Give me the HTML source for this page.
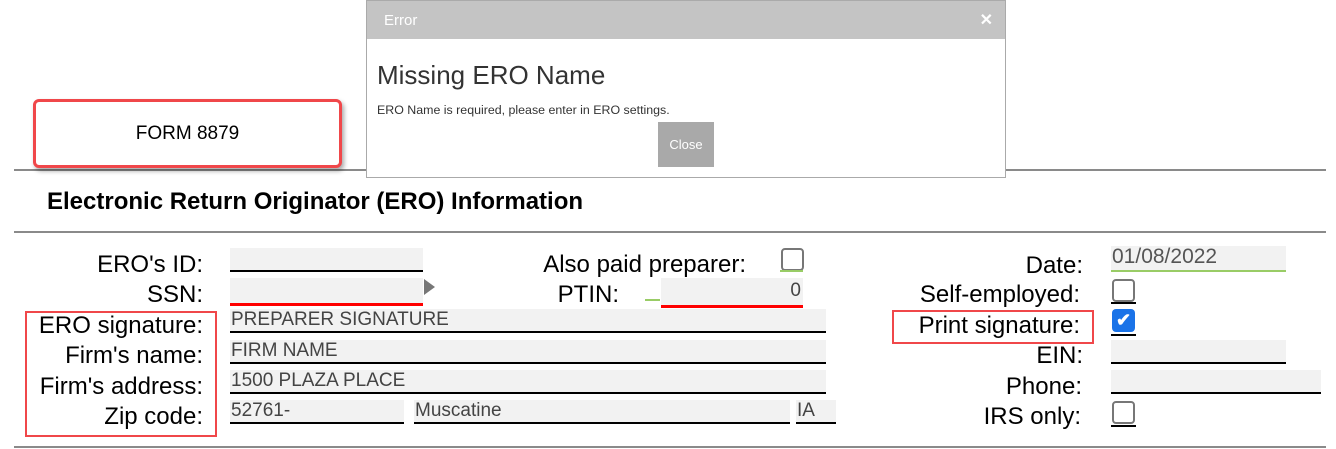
<!DOCTYPE html>
<html><head><style>
body{margin:0;width:1336px;height:449px;background:#fff;position:relative;overflow:hidden;font-family:"Liberation Sans",Arial,sans-serif;}
.a{position:absolute}
.hr{position:absolute;left:14px;width:1312px;height:2px;background:#8a8a8a}
.lbl{position:absolute;font-size:24px;color:#000;text-align:right;line-height:26px}
.in{position:absolute;background:#f2f2f2;border-bottom:2px solid #000;font-size:19px;color:#444;line-height:22px;box-sizing:border-box;padding-left:1px;font-family:"Liberation Sans Narrow","Liberation Sans",sans-serif}
.cb{position:absolute;width:19px;height:19px;border:2px solid #777;border-radius:4px;background:#fff}
.ul{position:absolute;height:2px;background:#000}
</style></head><body>
<div class="hr" style="top:169px"></div>
<div class="hr" style="top:231px"></div>
<div class="hr" style="top:446px"></div>

<div class="a" style="left:33px;top:99px;width:303px;height:63px;border:3px solid #f0474a;border-radius:6px;box-shadow:2px 3px 5px rgba(0,0,0,.35);text-align:center;line-height:63px;font-size:19px;background:#fff">FORM 8879</div>

<div class="a" style="left:47px;top:188px;font-size:24px;font-weight:bold">Electronic Return Originator (ERO) Information</div>

<div class="a" style="left:366px;top:0;width:638px;height:176px;border:1px solid #aaa;background:#fff">
 <div style="height:38px;background:#c4c4c4;color:#fff;font-size:15px;line-height:40px;padding-left:17px;position:relative">Error<span style="position:absolute;right:12px;top:0;font-weight:bold;font-size:16px">✕</span></div>
 <div style="position:absolute;left:10px;top:59px;font-size:26px;color:#333">Missing ERO Name</div>
 <div style="position:absolute;left:10px;top:102px;font-size:12.4px;color:#333">ERO Name is required, please enter in ERO settings.</div>
 <div style="position:absolute;left:291px;top:121px;width:56px;height:45px;background:#a9a9a9;color:#fff;font-size:13px;text-align:center;line-height:45px">Close</div>
</div>

<div class="lbl" style="left:0;width:203px;top:252px">ERO's ID:</div>
<div class="lbl" style="left:0;width:203px;top:282px">SSN:</div>
<div class="lbl" style="left:0;width:203px;top:313px">ERO signature:</div>
<div class="lbl" style="left:0;width:203px;top:343px">Firm's name:</div>
<div class="lbl" style="left:0;width:203px;top:374px">Firm's address:</div>
<div class="lbl" style="left:0;width:203px;top:404px">Zip code:</div>
<div class="a" style="left:25px;top:311px;width:188px;height:122px;border:2px solid #f0474a"></div>

<div class="in" style="left:230px;top:248px;width:193px;height:24px"></div>
<div class="in" style="left:230px;top:278px;width:193px;height:28px;border-bottom:3px solid #f00"></div>
<div class="a" style="left:424px;top:279px;width:0;height:0;border-left:11px solid #777;border-top:8px solid transparent;border-bottom:8px solid transparent"></div>
<div class="in" style="left:230px;top:309px;width:596px;height:24px">PREPARER SIGNATURE</div>
<div class="in" style="left:230px;top:340px;width:596px;height:24px">FIRM NAME</div>
<div class="in" style="left:230px;top:370px;width:596px;height:24px">1500 PLAZA PLACE</div>
<div class="in" style="left:230px;top:400px;width:174px;height:24px">52761-</div>
<div class="in" style="left:414px;top:400px;width:376px;height:24px">Muscatine</div>
<div class="in" style="left:796px;top:400px;width:40px;height:24px">IA</div>

<div class="lbl" style="left:480px;width:266px;top:252px">Also paid preparer:</div>
<div class="cb" style="left:781px;top:248px"></div>
<div class="a" style="left:780px;top:270px;width:23px;height:2px;background:#9c6"></div>
<div class="lbl" style="left:500px;width:119px;top:282px">PTIN:</div>
<div class="a" style="left:645px;top:299px;width:15px;height:2px;background:#9c6"></div>
<div class="in" style="left:661px;top:278px;width:142px;height:30px;border-bottom:3px solid #f00;text-align:right;padding-right:2px;line-height:26px">0</div>

<div class="lbl" style="left:860px;width:223px;top:253px">Date:</div>
<div class="lbl" style="left:860px;width:220px;top:282px">Self-employed:</div>
<div class="lbl" style="left:860px;width:220px;top:313px">Print signature:</div>
<div class="a" style="left:892px;top:310px;width:198px;height:30px;border:2px solid #f0474a"></div>
<div class="lbl" style="left:860px;width:223px;top:343px">EIN:</div>
<div class="lbl" style="left:860px;width:222px;top:374px">Phone:</div>
<div class="lbl" style="left:860px;width:221px;top:404px">IRS only:</div>

<div class="in" style="left:1111px;top:246px;width:175px;height:26px;border-bottom:2px solid #9c6;color:#555;font-family:'Liberation Sans',sans-serif;font-size:21px">01/08/2022</div>
<div class="cb" style="left:1112px;top:279px"></div><div class="ul" style="left:1111px;top:302px;width:25px"></div>
<div class="a" style="left:1112px;top:309px;width:23px;height:23px;border-radius:4px;background:#1a73e8;color:#fff;font-size:18px;font-weight:bold;text-align:center;line-height:23px">✔</div><div class="ul" style="left:1111px;top:334px;width:25px"></div>
<div class="in" style="left:1111px;top:340px;width:175px;height:24px"></div>
<div class="in" style="left:1111px;top:370px;width:210px;height:24px"></div>
<div class="cb" style="left:1112px;top:401px"></div><div class="ul" style="left:1111px;top:425px;width:25px"></div>
</body></html>
